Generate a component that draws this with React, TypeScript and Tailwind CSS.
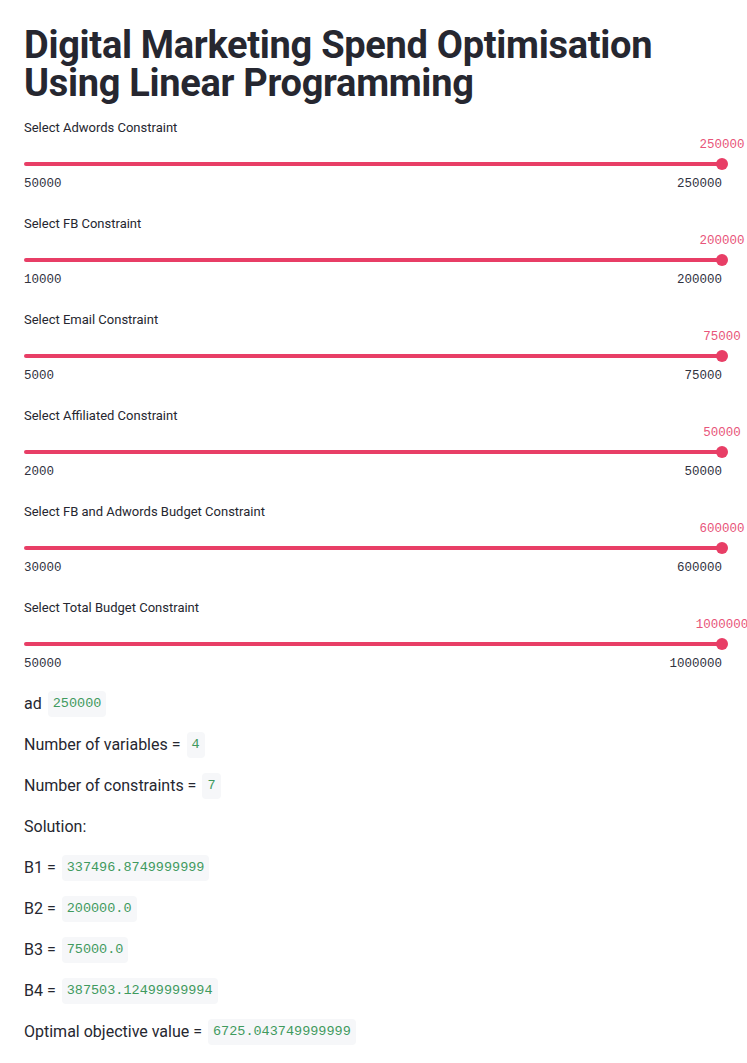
import React from "react";

const sliders = [
  { label: "Select Adwords Constraint", min: "50000", max: "250000" },
  { label: "Select FB Constraint", min: "10000", max: "200000" },
  { label: "Select Email Constraint", min: "5000", max: "75000" },
  { label: "Select Affiliated Constraint", min: "2000", max: "50000" },
  { label: "Select FB and Adwords Budget Constraint", min: "30000", max: "600000" },
  { label: "Select Total Budget Constraint", min: "50000", max: "1000000" },
];

const mono = { fontFamily: '"Liberation Mono", "DejaVu Sans Mono", monospace' };

function Slider({ label, min, max }: { label: string; min: string; max: string }) {
  return (
    <div className="flex flex-col">
      <div className="h-[16px] leading-[16px] text-[13px] text-[#262730]">{label}</div>
      <div className="h-[18px] flex justify-end items-center">
        <div className="w-0 flex justify-center">
          <span className="whitespace-nowrap text-[12.5px] text-[#e8557a]" style={mono}>
            {max}
          </span>
        </div>
      </div>
      <div className="h-[20px] flex items-center">
        <div className="relative w-full h-[4px] rounded-full bg-[#e83e66]">
          <div className="absolute right-[-6px] top-[-4px] w-[12px] h-[12px] rounded-full bg-[#e83e66]" />
        </div>
      </div>
      <div className="h-[20px] flex justify-between items-center text-[12.5px] text-[#31333f]" style={mono}>
        <span>{min}</span>
        <span>{max}</span>
      </div>
    </div>
  );
}

function Code({ children }: { children: React.ReactNode }) {
  return (
    <code
      className="ml-[6px] px-[5px] py-[3px] rounded bg-[#f6f7f9] text-[#3f9a5e] text-[13.5px]"
      style={mono}
    >
      {children}
    </code>
  );
}

export default function App() {
  const lines: [string, string][] = [
    ["ad", "250000"],
    ["Number of variables =", "4"],
    ["Number of constraints =", "7"],
    ["Solution:", ""],
    ["B1 =", "337496.8749999999"],
    ["B2 =", "200000.0"],
    ["B3 =", "75000.0"],
    ["B4 =", "387503.12499999994"],
    ["Optimal objective value =", "6725.043749999999"],
  ];
  return (
    <div
      className="w-[747px] h-[1063px] overflow-hidden bg-white text-[#262730]"
      style={{ fontFamily: 'Roboto, "Noto Sans", sans-serif' }}
    >
      <div className="pl-[24px] w-[722px]">
        <h1 className="pt-[26px] text-[38px] leading-[38px] font-bold text-[#262730] tracking-[-0.3px]">
          Digital Marketing Spend Optimisation
          <br />
          Using Linear Programming
        </h1>
        <div className="mt-[18px] flex flex-col gap-[22px]">
          {sliders.map((s) => (
            <Slider key={s.label} {...s} />
          ))}
        </div>
        <div className="mt-[18px] flex flex-col gap-[17px]">
          {lines.map(([t, c]) => (
            <div key={t} className="h-[24px] flex items-center text-[16px]">
              <span>{t}</span>
              {c && <Code>{c}</Code>}
            </div>
          ))}
        </div>
      </div>
    </div>
  );
}
